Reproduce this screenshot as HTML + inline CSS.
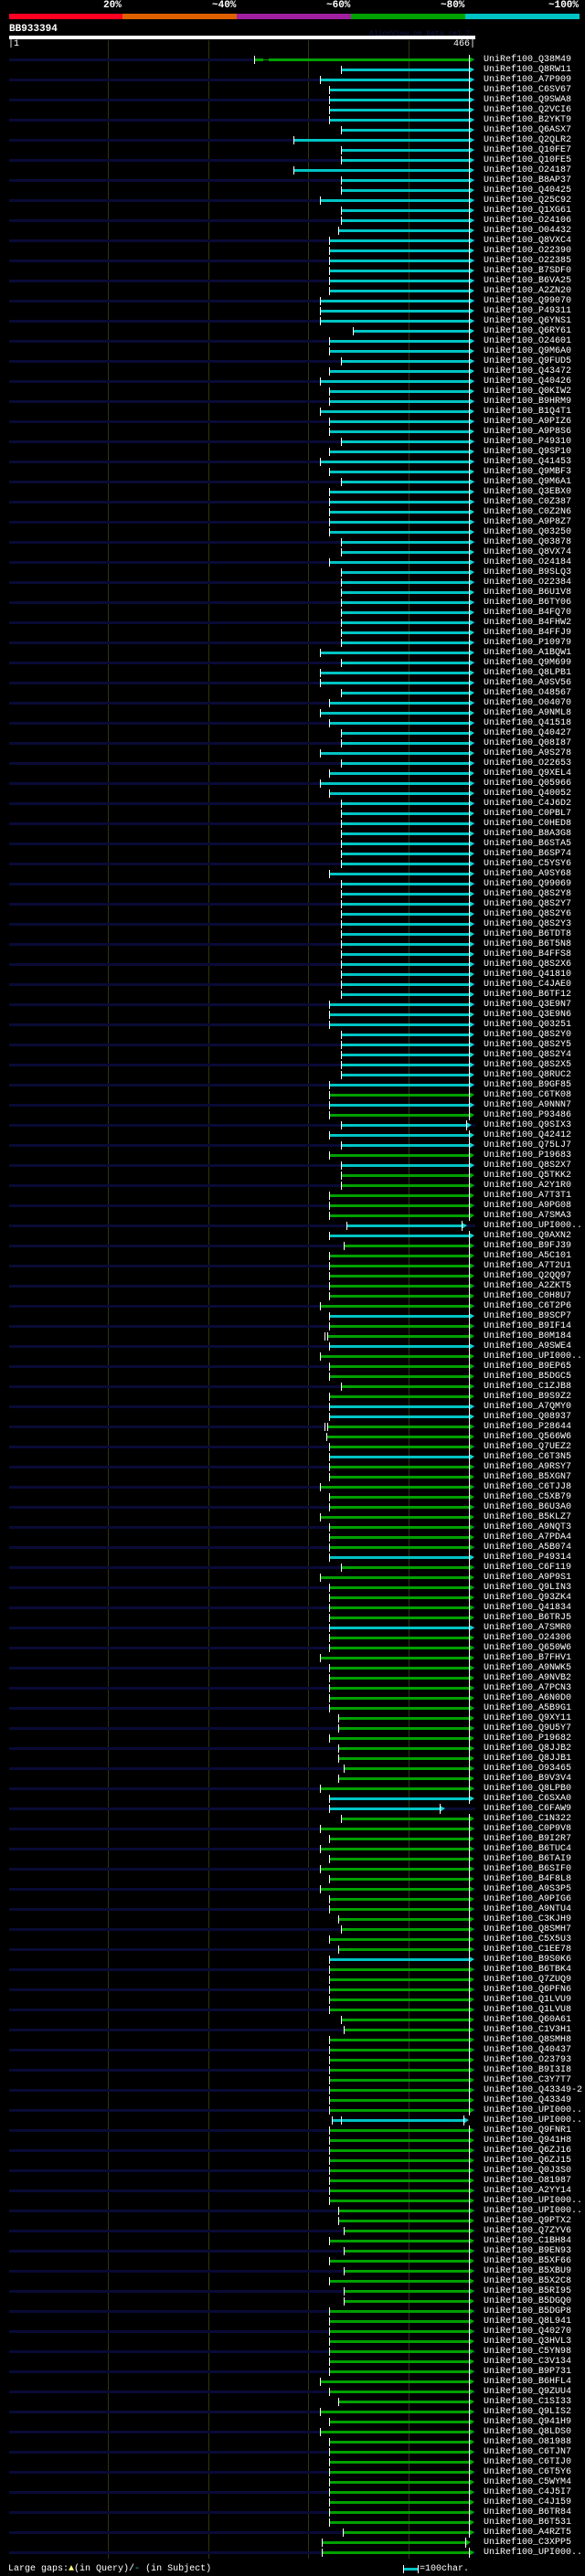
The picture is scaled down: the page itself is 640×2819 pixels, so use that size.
<!DOCTYPE html>
<html><head><meta charset="utf-8"><style>
*{margin:0;padding:0}
html,body{width:640px;height:2819px;background:#000;overflow:hidden;position:relative;font-family:"Liberation Mono",monospace}
.abs{position:absolute}
.gl{position:absolute;top:44px;height:2756px;width:1px;background:#34340c}
.pct{position:absolute;top:0;font:bold 11px "Liberation Mono",monospace;color:#fff;line-height:12px}
.r{position:absolute;left:0;width:640px;height:11px;padding-left:529px;box-sizing:border-box;font-size:10px;line-height:11px;color:#fff;white-space:nowrap}
.r.q::before{content:"";position:absolute;left:10px;width:510px;top:4px;height:3px;background:#0a0a36}
.r::after{content:"";position:absolute;left:var(--e,513px);top:0;height:11px;width:1px;background:#fff}
.r b{position:absolute;top:4px;height:3px;right:calc(640px - var(--e,513px))}
.r b::before{content:"";position:absolute;left:0;top:-3px;height:9px;width:1px;background:#fff}
.r b::after{content:"";position:absolute;right:-6px;top:-2px;border-top:3px solid transparent;border-bottom:4px solid transparent;border-left:6px solid}
.g b{background:#00a000;color:#00b000}
.c b{background:#00c4c4;color:#10d8d8}
.r i{position:absolute}
</style></head><body>
<div class="pct" style="left:113px">20%</div>
<div class="pct" style="left:232px">~40%</div>
<div class="pct" style="left:357px">~60%</div>
<div class="pct" style="left:482px">~80%</div>
<div class="pct" style="left:600px">~100%</div>
<div class="abs" style="left:10px;top:15px;width:124px;height:6px;background:#ff0022"></div>
<div class="abs" style="left:134px;top:15px;width:125px;height:6px;background:#e06000"></div>
<div class="abs" style="left:259px;top:15px;width:125px;height:6px;background:#a020a0"></div>
<div class="abs" style="left:384px;top:15px;width:125px;height:6px;background:#00a000"></div>
<div class="abs" style="left:509px;top:15px;width:125px;height:6px;background:#00c4c4"></div>
<div class="abs" style="left:10px;top:26px;font:bold 11px 'Liberation Mono',monospace;color:#fff">BB933394</div>
<div class="abs" style="left:404px;top:33px;font:8px 'Liberation Mono',monospace;color:#141448">AlignView.pm Beta rel.7</div>
<div class="abs" style="left:10px;top:39px;width:510px;height:4px;background:#fff"></div>
<div class="abs" style="left:9px;top:44px;font-size:10px;color:#fff;line-height:10px">|1</div>
<div class="abs" style="left:496px;top:44px;font-size:10px;color:#fff;line-height:10px">466|</div>
<div class="gl" style="left:118px"></div>
<div class="gl" style="left:228px"></div>
<div class="gl" style="left:337px"></div>
<div class="gl" style="left:447px"></div>

<div class="r q g" style="top:60px"><b style="left:278px"></b><i style="left:288px;top:4px;width:6px;height:3px;background:linear-gradient(#000 1px,#00a000 1px,#00a000 2px,#000 2px)"></i>UniRef100_Q38M49</div>
<div class="r c" style="top:71px"><b style="left:373px"></b>UniRef100_Q8RW11</div>
<div class="r q c" style="top:82px"><b style="left:350px"></b>UniRef100_A7P909</div>
<div class="r c" style="top:93px"><b style="left:360px"></b>UniRef100_C6SV67</div>
<div class="r q c" style="top:104px"><b style="left:360px"></b>UniRef100_Q9SWA8</div>
<div class="r c" style="top:115px"><b style="left:360px"></b>UniRef100_Q2VCI6</div>
<div class="r q c" style="top:126px"><b style="left:360px"></b>UniRef100_B2YKT9</div>
<div class="r c" style="top:137px"><b style="left:373px"></b>UniRef100_Q6ASX7</div>
<div class="r q c" style="top:148px"><b style="left:321px"></b>UniRef100_Q2QLR2</div>
<div class="r c" style="top:159px"><b style="left:373px"></b>UniRef100_Q10FE7</div>
<div class="r q c" style="top:170px"><b style="left:373px"></b>UniRef100_Q10FE5</div>
<div class="r c" style="top:181px"><b style="left:321px"></b>UniRef100_O24187</div>
<div class="r q c" style="top:192px"><b style="left:373px"></b>UniRef100_B8AP37</div>
<div class="r c" style="top:203px"><b style="left:373px"></b>UniRef100_Q40425</div>
<div class="r q c" style="top:214px"><b style="left:350px"></b>UniRef100_Q25C92</div>
<div class="r c" style="top:225px"><b style="left:373px"></b>UniRef100_Q1XG61</div>
<div class="r q c" style="top:236px"><b style="left:373px"></b>UniRef100_O24106</div>
<div class="r c" style="top:247px"><b style="left:370px"></b>UniRef100_O04432</div>
<div class="r q c" style="top:258px"><b style="left:360px"></b>UniRef100_Q8VXC4</div>
<div class="r c" style="top:269px"><b style="left:360px"></b>UniRef100_O22390</div>
<div class="r q c" style="top:280px"><b style="left:360px"></b>UniRef100_O22385</div>
<div class="r c" style="top:291px"><b style="left:360px"></b>UniRef100_B7SDF0</div>
<div class="r q c" style="top:302px"><b style="left:360px"></b>UniRef100_B6VA25</div>
<div class="r c" style="top:313px"><b style="left:360px"></b>UniRef100_A2ZN20</div>
<div class="r q c" style="top:324px"><b style="left:350px"></b>UniRef100_Q99070</div>
<div class="r c" style="top:335px"><b style="left:350px"></b>UniRef100_P49311</div>
<div class="r q c" style="top:346px"><b style="left:350px"></b>UniRef100_Q6YNS1</div>
<div class="r c" style="top:357px"><b style="left:386px"></b>UniRef100_Q6RY61</div>
<div class="r q c" style="top:368px"><b style="left:360px"></b>UniRef100_O24601</div>
<div class="r c" style="top:379px"><b style="left:360px"></b>UniRef100_Q9M6A0</div>
<div class="r q c" style="top:390px"><b style="left:373px"></b>UniRef100_Q9FUD5</div>
<div class="r c" style="top:401px"><b style="left:360px"></b>UniRef100_Q43472</div>
<div class="r q c" style="top:412px"><b style="left:350px"></b>UniRef100_Q40426</div>
<div class="r c" style="top:423px"><b style="left:360px"></b>UniRef100_Q0KIW2</div>
<div class="r q c" style="top:434px"><b style="left:360px"></b>UniRef100_B9HRM9</div>
<div class="r c" style="top:445px"><b style="left:350px"></b>UniRef100_B1Q4T1</div>
<div class="r q c" style="top:456px"><b style="left:360px"></b>UniRef100_A9PIZ6</div>
<div class="r c" style="top:467px"><b style="left:360px"></b>UniRef100_A9P8S6</div>
<div class="r q c" style="top:478px"><b style="left:373px"></b>UniRef100_P49310</div>
<div class="r c" style="top:489px"><b style="left:360px"></b>UniRef100_Q9SP10</div>
<div class="r q c" style="top:500px"><b style="left:350px"></b>UniRef100_Q41453</div>
<div class="r c" style="top:511px"><b style="left:360px"></b>UniRef100_Q9MBF3</div>
<div class="r q c" style="top:522px"><b style="left:373px"></b>UniRef100_Q9M6A1</div>
<div class="r c" style="top:533px"><b style="left:360px"></b>UniRef100_Q3EBX0</div>
<div class="r q c" style="top:544px"><b style="left:360px"></b>UniRef100_C0Z387</div>
<div class="r c" style="top:555px"><b style="left:360px"></b>UniRef100_C0Z2N6</div>
<div class="r q c" style="top:566px"><b style="left:360px"></b>UniRef100_A9P8Z7</div>
<div class="r c" style="top:577px"><b style="left:360px"></b>UniRef100_Q03250</div>
<div class="r q c" style="top:588px"><b style="left:373px"></b>UniRef100_Q03878</div>
<div class="r c" style="top:599px"><b style="left:373px"></b>UniRef100_Q8VX74</div>
<div class="r q c" style="top:610px"><b style="left:360px"></b>UniRef100_O24184</div>
<div class="r c" style="top:621px"><b style="left:373px"></b>UniRef100_B9SLQ3</div>
<div class="r q c" style="top:632px"><b style="left:373px"></b>UniRef100_O22384</div>
<div class="r c" style="top:643px"><b style="left:373px"></b>UniRef100_B6U1V8</div>
<div class="r q c" style="top:654px"><b style="left:373px"></b>UniRef100_B6TY06</div>
<div class="r c" style="top:665px"><b style="left:373px"></b>UniRef100_B4FQ70</div>
<div class="r q c" style="top:676px"><b style="left:373px"></b>UniRef100_B4FHW2</div>
<div class="r c" style="top:687px"><b style="left:373px"></b>UniRef100_B4FFJ9</div>
<div class="r q c" style="top:698px"><b style="left:373px"></b>UniRef100_P10979</div>
<div class="r c" style="top:709px"><b style="left:350px"></b>UniRef100_A1BQW1</div>
<div class="r q c" style="top:720px"><b style="left:373px"></b>UniRef100_Q9M699</div>
<div class="r c" style="top:731px"><b style="left:350px"></b>UniRef100_Q8LPB1</div>
<div class="r q c" style="top:742px"><b style="left:350px"></b>UniRef100_A9SV56</div>
<div class="r c" style="top:753px"><b style="left:373px"></b>UniRef100_O48567</div>
<div class="r q c" style="top:764px"><b style="left:360px"></b>UniRef100_O04070</div>
<div class="r c" style="top:775px"><b style="left:350px"></b>UniRef100_A9NML8</div>
<div class="r q c" style="top:786px"><b style="left:360px"></b>UniRef100_Q41518</div>
<div class="r c" style="top:797px"><b style="left:373px"></b>UniRef100_Q40427</div>
<div class="r q c" style="top:808px"><b style="left:373px"></b>UniRef100_Q08I87</div>
<div class="r c" style="top:819px"><b style="left:350px"></b>UniRef100_A9S278</div>
<div class="r q c" style="top:830px"><b style="left:373px"></b>UniRef100_O22653</div>
<div class="r c" style="top:841px"><b style="left:360px"></b>UniRef100_Q9XEL4</div>
<div class="r q c" style="top:852px"><b style="left:350px"></b>UniRef100_Q05966</div>
<div class="r c" style="top:863px"><b style="left:360px"></b>UniRef100_Q40052</div>
<div class="r q c" style="top:874px"><b style="left:373px"></b>UniRef100_C4J6D2</div>
<div class="r c" style="top:885px"><b style="left:373px"></b>UniRef100_C0PBL7</div>
<div class="r q c" style="top:896px"><b style="left:373px"></b>UniRef100_C0HED8</div>
<div class="r c" style="top:907px"><b style="left:373px"></b>UniRef100_B8A3G8</div>
<div class="r q c" style="top:918px"><b style="left:373px"></b>UniRef100_B6STA5</div>
<div class="r c" style="top:929px"><b style="left:373px"></b>UniRef100_B6SP74</div>
<div class="r q c" style="top:940px"><b style="left:373px"></b>UniRef100_C5YSY6</div>
<div class="r c" style="top:951px"><b style="left:360px"></b>UniRef100_A9SY68</div>
<div class="r q c" style="top:962px"><b style="left:373px"></b>UniRef100_Q99069</div>
<div class="r c" style="top:973px"><b style="left:373px"></b>UniRef100_Q8S2Y8</div>
<div class="r q c" style="top:984px"><b style="left:373px"></b>UniRef100_Q8S2Y7</div>
<div class="r c" style="top:995px"><b style="left:373px"></b>UniRef100_Q8S2Y6</div>
<div class="r q c" style="top:1006px"><b style="left:373px"></b>UniRef100_Q8S2Y3</div>
<div class="r c" style="top:1017px"><b style="left:373px"></b>UniRef100_B6TDT8</div>
<div class="r q c" style="top:1028px"><b style="left:373px"></b>UniRef100_B6T5N8</div>
<div class="r c" style="top:1039px"><b style="left:373px"></b>UniRef100_B4FFS8</div>
<div class="r q c" style="top:1050px"><b style="left:373px"></b>UniRef100_Q8S2X6</div>
<div class="r c" style="top:1061px"><b style="left:373px"></b>UniRef100_Q41810</div>
<div class="r q c" style="top:1072px"><b style="left:373px"></b>UniRef100_C4JAE0</div>
<div class="r c" style="top:1083px"><b style="left:373px"></b>UniRef100_B6TF12</div>
<div class="r q c" style="top:1094px"><b style="left:360px"></b>UniRef100_Q3E9N7</div>
<div class="r c" style="top:1105px"><b style="left:360px"></b>UniRef100_Q3E9N6</div>
<div class="r q c" style="top:1116px"><b style="left:360px"></b>UniRef100_Q03251</div>
<div class="r c" style="top:1127px"><b style="left:373px"></b>UniRef100_Q8S2Y0</div>
<div class="r q c" style="top:1138px"><b style="left:373px"></b>UniRef100_Q8S2Y5</div>
<div class="r c" style="top:1149px"><b style="left:373px"></b>UniRef100_Q8S2Y4</div>
<div class="r q c" style="top:1160px"><b style="left:373px"></b>UniRef100_Q8S2X5</div>
<div class="r c" style="top:1171px"><b style="left:373px"></b>UniRef100_Q8RUC2</div>
<div class="r q c" style="top:1182px"><b style="left:360px"></b>UniRef100_B9GF85</div>
<div class="r g" style="top:1193px"><b style="left:360px"></b>UniRef100_C6TK08</div>
<div class="r q c" style="top:1204px"><b style="left:360px"></b>UniRef100_A9NNN7</div>
<div class="r g" style="top:1215px"><b style="left:360px"></b>UniRef100_P93486</div>
<div class="r q c" style="top:1226px;--e:510px"><b style="left:373px"></b>UniRef100_Q9SIX3</div>
<div class="r c" style="top:1237px"><b style="left:360px"></b>UniRef100_Q42412</div>
<div class="r q c" style="top:1248px"><b style="left:373px"></b>UniRef100_Q75LJ7</div>
<div class="r g" style="top:1259px"><b style="left:360px"></b>UniRef100_P19683</div>
<div class="r q c" style="top:1270px"><b style="left:373px"></b>UniRef100_Q8S2X7</div>
<div class="r g" style="top:1281px"><b style="left:373px"></b>UniRef100_Q5TKK2</div>
<div class="r q g" style="top:1292px"><b style="left:373px"></b>UniRef100_A2Y1R0</div>
<div class="r g" style="top:1303px"><b style="left:360px"></b>UniRef100_A7T3T1</div>
<div class="r q g" style="top:1314px"><b style="left:360px"></b>UniRef100_A9PG08</div>
<div class="r g" style="top:1325px"><b style="left:360px"></b>UniRef100_A7SMA3</div>
<div class="r q c" style="top:1336px;--e:505px"><b style="left:379px"></b>UniRef100_UPI000..</div>
<div class="r c" style="top:1347px"><b style="left:360px"></b>UniRef100_Q9AXN2</div>
<div class="r q g" style="top:1358px"><b style="left:376px"></b>UniRef100_B9FJ39</div>
<div class="r g" style="top:1369px"><b style="left:360px"></b>UniRef100_A5C101</div>
<div class="r q g" style="top:1380px"><b style="left:360px"></b>UniRef100_A7T2U1</div>
<div class="r g" style="top:1391px"><b style="left:360px"></b>UniRef100_Q2QQ97</div>
<div class="r q g" style="top:1402px"><b style="left:360px"></b>UniRef100_A2ZKT5</div>
<div class="r g" style="top:1413px"><b style="left:360px"></b>UniRef100_C0H8U7</div>
<div class="r q g" style="top:1424px"><b style="left:350px"></b>UniRef100_C6T2P6</div>
<div class="r c" style="top:1435px"><b style="left:360px"></b>UniRef100_B9SCP7</div>
<div class="r q g" style="top:1446px"><b style="left:360px"></b>UniRef100_B9IF14</div>
<div class="r g" style="top:1457px"><b style="left:358px"></b><i style="left:355px;top:1px;width:1px;height:9px;background:#fff"></i>UniRef100_B0M184</div>
<div class="r q c" style="top:1468px"><b style="left:360px"></b>UniRef100_A9SWE4</div>
<div class="r g" style="top:1479px"><b style="left:350px"></b>UniRef100_UPI000..</div>
<div class="r q g" style="top:1490px"><b style="left:360px"></b>UniRef100_B9EP65</div>
<div class="r g" style="top:1501px"><b style="left:360px"></b>UniRef100_B5DGC5</div>
<div class="r q g" style="top:1512px"><b style="left:373px"></b>UniRef100_C1ZJB8</div>
<div class="r g" style="top:1523px"><b style="left:360px"></b>UniRef100_B9S9Z2</div>
<div class="r q c" style="top:1534px"><b style="left:360px"></b>UniRef100_A7QMY0</div>
<div class="r c" style="top:1545px"><b style="left:360px"></b>UniRef100_Q08937</div>
<div class="r q g" style="top:1556px"><b style="left:358px"></b><i style="left:355px;top:1px;width:1px;height:9px;background:#fff"></i>UniRef100_P28644</div>
<div class="r g" style="top:1567px"><b style="left:357px"></b>UniRef100_Q566W6</div>
<div class="r q g" style="top:1578px"><b style="left:360px"></b>UniRef100_Q7UEZ2</div>
<div class="r c" style="top:1589px"><b style="left:360px"></b>UniRef100_C6T3N5</div>
<div class="r q g" style="top:1600px"><b style="left:360px"></b>UniRef100_A9RSY7</div>
<div class="r g" style="top:1611px"><b style="left:360px"></b>UniRef100_B5XGN7</div>
<div class="r q g" style="top:1622px"><b style="left:350px"></b>UniRef100_C6TJJ8</div>
<div class="r g" style="top:1633px"><b style="left:360px"></b>UniRef100_C5XB79</div>
<div class="r q g" style="top:1644px"><b style="left:360px"></b>UniRef100_B6U3A0</div>
<div class="r g" style="top:1655px"><b style="left:350px"></b>UniRef100_B5KLZ7</div>
<div class="r q g" style="top:1666px"><b style="left:360px"></b>UniRef100_A9NQT3</div>
<div class="r g" style="top:1677px"><b style="left:360px"></b>UniRef100_A7PDA4</div>
<div class="r q g" style="top:1688px"><b style="left:360px"></b>UniRef100_A5B074</div>
<div class="r c" style="top:1699px"><b style="left:360px"></b>UniRef100_P49314</div>
<div class="r q g" style="top:1710px"><b style="left:373px"></b>UniRef100_C6F119</div>
<div class="r g" style="top:1721px"><b style="left:350px"></b>UniRef100_A9P9S1</div>
<div class="r q g" style="top:1732px"><b style="left:360px"></b>UniRef100_Q9LIN3</div>
<div class="r g" style="top:1743px"><b style="left:360px"></b>UniRef100_Q93ZK4</div>
<div class="r q g" style="top:1754px"><b style="left:360px"></b>UniRef100_Q41834</div>
<div class="r g" style="top:1765px"><b style="left:360px"></b>UniRef100_B6TRJ5</div>
<div class="r q c" style="top:1776px"><b style="left:360px"></b>UniRef100_A7SMR0</div>
<div class="r g" style="top:1787px"><b style="left:360px"></b>UniRef100_O24306</div>
<div class="r q g" style="top:1798px"><b style="left:360px"></b>UniRef100_Q650W6</div>
<div class="r g" style="top:1809px"><b style="left:350px"></b>UniRef100_B7FHV1</div>
<div class="r q g" style="top:1820px"><b style="left:360px"></b>UniRef100_A9NWK5</div>
<div class="r g" style="top:1831px"><b style="left:360px"></b>UniRef100_A9NVB2</div>
<div class="r q g" style="top:1842px"><b style="left:360px"></b>UniRef100_A7PCN3</div>
<div class="r g" style="top:1853px"><b style="left:360px"></b>UniRef100_A6N0D0</div>
<div class="r q g" style="top:1864px"><b style="left:360px"></b>UniRef100_A5B9G1</div>
<div class="r g" style="top:1875px"><b style="left:370px"></b>UniRef100_Q9XY11</div>
<div class="r q g" style="top:1886px"><b style="left:370px"></b>UniRef100_Q9U5Y7</div>
<div class="r g" style="top:1897px"><b style="left:360px"></b>UniRef100_P19682</div>
<div class="r q g" style="top:1908px"><b style="left:370px"></b>UniRef100_Q8JJB2</div>
<div class="r g" style="top:1919px"><b style="left:370px"></b>UniRef100_Q8JJB1</div>
<div class="r q g" style="top:1930px"><b style="left:376px"></b>UniRef100_O93465</div>
<div class="r g" style="top:1941px"><b style="left:370px"></b>UniRef100_B9V3V4</div>
<div class="r q g" style="top:1952px"><b style="left:350px"></b>UniRef100_Q8LPB0</div>
<div class="r c" style="top:1963px"><b style="left:360px"></b>UniRef100_C6SXA0</div>
<div class="r q c" style="top:1974px;--e:481px"><b style="left:360px"></b>UniRef100_C6FAW9</div>
<div class="r g" style="top:1985px"><b style="left:373px"></b>UniRef100_C1N322</div>
<div class="r q g" style="top:1996px"><b style="left:350px"></b>UniRef100_C0P9V8</div>
<div class="r g" style="top:2007px"><b style="left:360px"></b>UniRef100_B9I2R7</div>
<div class="r q g" style="top:2018px"><b style="left:350px"></b>UniRef100_B6TUC4</div>
<div class="r g" style="top:2029px"><b style="left:360px"></b>UniRef100_B6TAI9</div>
<div class="r q g" style="top:2040px"><b style="left:350px"></b>UniRef100_B6SIF0</div>
<div class="r g" style="top:2051px"><b style="left:360px"></b>UniRef100_B4F8L8</div>
<div class="r q g" style="top:2062px"><b style="left:350px"></b>UniRef100_A9S3P5</div>
<div class="r g" style="top:2073px"><b style="left:360px"></b>UniRef100_A9PIG6</div>
<div class="r q g" style="top:2084px"><b style="left:360px"></b>UniRef100_A9NTU4</div>
<div class="r g" style="top:2095px"><b style="left:370px"></b>UniRef100_C3KJH9</div>
<div class="r q g" style="top:2106px"><b style="left:373px"></b>UniRef100_Q8SMH7</div>
<div class="r g" style="top:2117px"><b style="left:360px"></b>UniRef100_C5X5U3</div>
<div class="r q g" style="top:2128px"><b style="left:370px"></b>UniRef100_C1EE78</div>
<div class="r c" style="top:2139px"><b style="left:360px"></b>UniRef100_B9S0K6</div>
<div class="r q g" style="top:2150px"><b style="left:360px"></b>UniRef100_B6TBK4</div>
<div class="r g" style="top:2161px"><b style="left:360px"></b>UniRef100_Q7ZUQ9</div>
<div class="r q g" style="top:2172px"><b style="left:360px"></b>UniRef100_Q6PFN6</div>
<div class="r g" style="top:2183px"><b style="left:360px"></b>UniRef100_Q1LVU9</div>
<div class="r q g" style="top:2194px"><b style="left:360px"></b>UniRef100_Q1LVU8</div>
<div class="r g" style="top:2205px"><b style="left:373px"></b>UniRef100_Q60A61</div>
<div class="r q g" style="top:2216px"><b style="left:376px"></b>UniRef100_C1V3H1</div>
<div class="r g" style="top:2227px"><b style="left:360px"></b>UniRef100_Q8SMH8</div>
<div class="r q g" style="top:2238px"><b style="left:360px"></b>UniRef100_Q40437</div>
<div class="r g" style="top:2249px"><b style="left:360px"></b>UniRef100_O23793</div>
<div class="r q g" style="top:2260px"><b style="left:360px"></b>UniRef100_B9I3I8</div>
<div class="r g" style="top:2271px"><b style="left:360px"></b>UniRef100_C3Y7T7</div>
<div class="r q g" style="top:2282px"><b style="left:360px"></b>UniRef100_Q43349-2</div>
<div class="r g" style="top:2293px"><b style="left:360px"></b>UniRef100_Q43349</div>
<div class="r q g" style="top:2304px"><b style="left:360px"></b>UniRef100_UPI000..</div>
<div class="r c" style="top:2315px;--e:507px"><b style="left:363px"></b><i style="left:373px;top:1px;width:1px;height:9px;background:#fff"></i>UniRef100_UPI000..</div>
<div class="r q g" style="top:2326px"><b style="left:360px"></b>UniRef100_Q9FNR1</div>
<div class="r g" style="top:2337px"><b style="left:360px"></b>UniRef100_Q941H8</div>
<div class="r q g" style="top:2348px"><b style="left:360px"></b>UniRef100_Q6ZJ16</div>
<div class="r g" style="top:2359px"><b style="left:360px"></b>UniRef100_Q6ZJ15</div>
<div class="r q g" style="top:2370px"><b style="left:360px"></b>UniRef100_Q0J3S0</div>
<div class="r g" style="top:2381px"><b style="left:360px"></b>UniRef100_O81987</div>
<div class="r q g" style="top:2392px"><b style="left:360px"></b>UniRef100_A2YY14</div>
<div class="r g" style="top:2403px"><b style="left:360px"></b>UniRef100_UPI000..</div>
<div class="r q g" style="top:2414px"><b style="left:370px"></b>UniRef100_UPI000..</div>
<div class="r g" style="top:2425px"><b style="left:370px"></b>UniRef100_Q9PTX2</div>
<div class="r q g" style="top:2436px"><b style="left:376px"></b>UniRef100_Q7ZYV6</div>
<div class="r g" style="top:2447px"><b style="left:360px"></b>UniRef100_C1BH84</div>
<div class="r q g" style="top:2458px"><b style="left:376px"></b>UniRef100_B9EN93</div>
<div class="r g" style="top:2469px"><b style="left:360px"></b>UniRef100_B5XF66</div>
<div class="r q g" style="top:2480px"><b style="left:376px"></b>UniRef100_B5XBU9</div>
<div class="r g" style="top:2491px"><b style="left:360px"></b>UniRef100_B5X2C8</div>
<div class="r q g" style="top:2502px"><b style="left:376px"></b>UniRef100_B5RI95</div>
<div class="r g" style="top:2513px"><b style="left:376px"></b>UniRef100_B5DGQ0</div>
<div class="r q g" style="top:2524px"><b style="left:360px"></b>UniRef100_B5DGP8</div>
<div class="r g" style="top:2535px"><b style="left:360px"></b>UniRef100_Q8L941</div>
<div class="r q g" style="top:2546px"><b style="left:360px"></b>UniRef100_Q40270</div>
<div class="r g" style="top:2557px"><b style="left:360px"></b>UniRef100_Q3HVL3</div>
<div class="r q g" style="top:2568px"><b style="left:360px"></b>UniRef100_C5YN98</div>
<div class="r g" style="top:2579px"><b style="left:360px"></b>UniRef100_C3V134</div>
<div class="r q g" style="top:2590px"><b style="left:360px"></b>UniRef100_B9P731</div>
<div class="r g" style="top:2601px"><b style="left:350px"></b>UniRef100_B6HFL4</div>
<div class="r q g" style="top:2612px"><b style="left:360px"></b>UniRef100_Q9ZUU4</div>
<div class="r g" style="top:2623px"><b style="left:370px"></b>UniRef100_C1SI33</div>
<div class="r q g" style="top:2634px"><b style="left:350px"></b>UniRef100_Q9LIS2</div>
<div class="r g" style="top:2645px"><b style="left:360px"></b>UniRef100_Q941H9</div>
<div class="r q g" style="top:2656px"><b style="left:350px"></b>UniRef100_Q8LDS0</div>
<div class="r g" style="top:2667px"><b style="left:360px"></b>UniRef100_O81988</div>
<div class="r q g" style="top:2678px"><b style="left:360px"></b>UniRef100_C6TJN7</div>
<div class="r g" style="top:2689px"><b style="left:360px"></b>UniRef100_C6TIJ0</div>
<div class="r q g" style="top:2700px"><b style="left:360px"></b>UniRef100_C6T5Y6</div>
<div class="r g" style="top:2711px"><b style="left:360px"></b>UniRef100_C5WYM4</div>
<div class="r q g" style="top:2722px"><b style="left:360px"></b>UniRef100_C4J5I7</div>
<div class="r g" style="top:2733px"><b style="left:360px"></b>UniRef100_C4J159</div>
<div class="r q g" style="top:2744px"><b style="left:360px"></b>UniRef100_B6TR84</div>
<div class="r g" style="top:2755px"><b style="left:360px"></b>UniRef100_B6T531</div>
<div class="r q g" style="top:2766px"><b style="left:375px"></b>UniRef100_A4RZT5</div>
<div class="r g" style="top:2777px;--e:509px"><b style="left:352px"></b>UniRef100_C3XPP5</div>
<div class="r q g" style="top:2788px"><b style="left:352px"></b>UniRef100_UPI000..</div>

<div class="abs" style="left:9px;top:2806px;font-size:10px;line-height:11px;color:#fff;white-space:nowrap">Large gaps:<span style="color:#ffff80">▲</span>(in Query)/<span style="color:#10d8d8">-</span> (in Subject)</div>
<div class="abs" style="left:441px;top:2807px;width:1px;height:9px;background:#fff"></div>
<div class="abs" style="left:442px;top:2810px;width:15px;height:3px;background:#00c4c4"></div>
<div class="abs" style="left:457px;top:2807px;width:1px;height:9px;background:#fff"></div>
<div class="abs" style="left:459px;top:2806px;font-size:10px;line-height:11px;color:#fff">=100char.</div>
</body></html>
